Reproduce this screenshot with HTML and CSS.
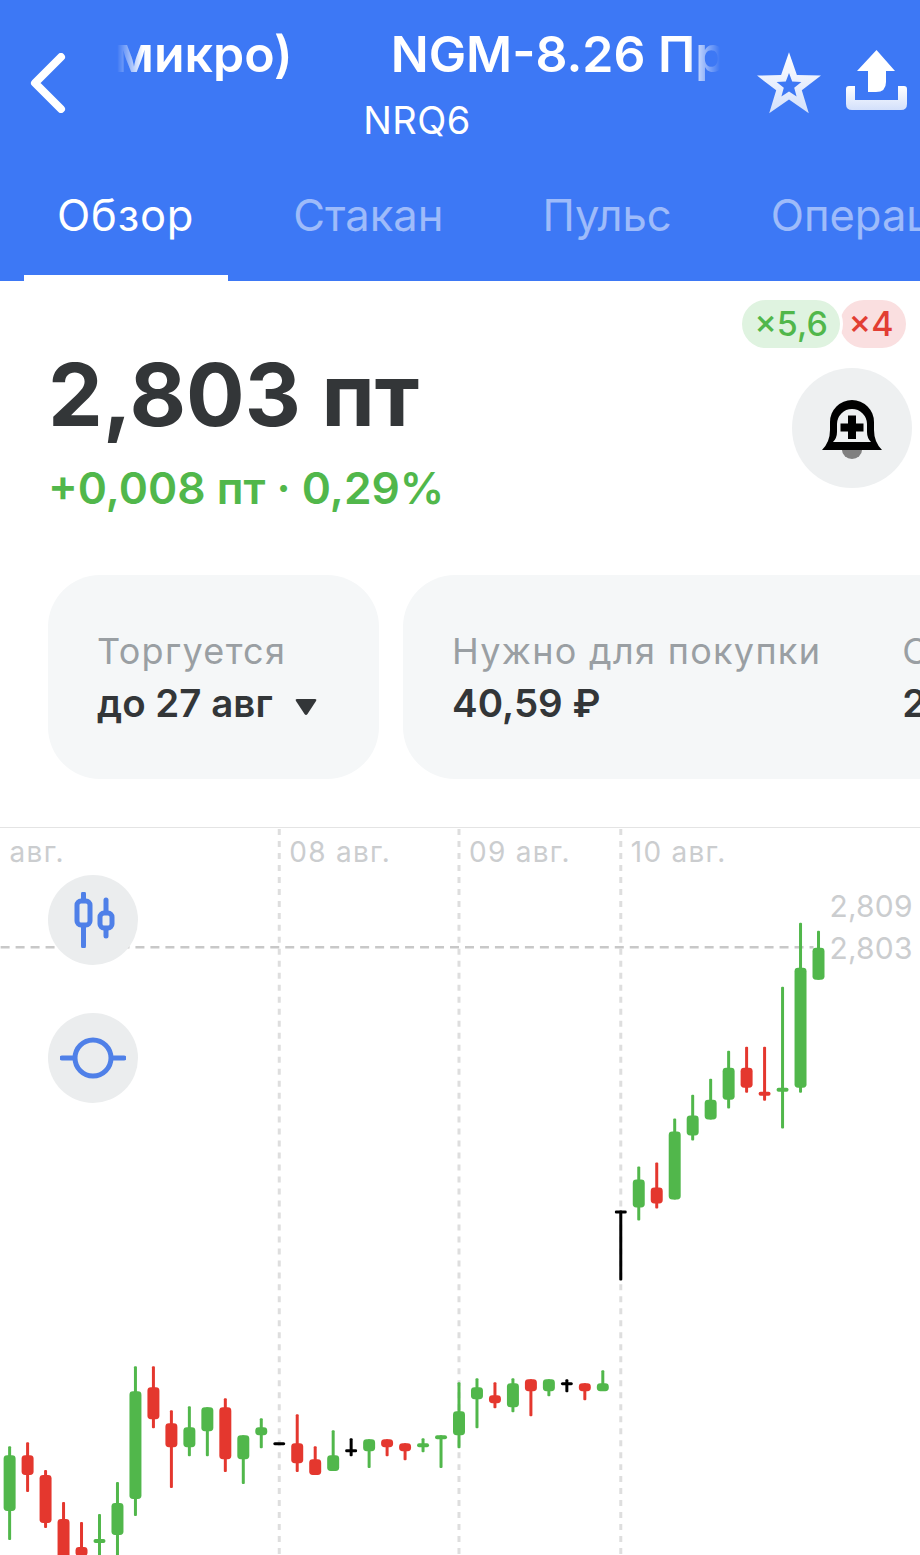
FILE: index.html
```html
<!DOCTYPE html>
<html lang="ru">
<head>
    <meta charset="UTF-8">
    <meta name="viewport" content="width=device-width, initial-scale=1.0">
    <title>NGM-8.26</title>
    <link rel="stylesheet" href="styles.css">
</head>
<body>
    <div class="app">
        <header class="header">
            <div class="topbar">
                <svg class="back" viewBox="0 0 36 60">
                    <path d="M31 4 L5 30 L31 56"/>
                </svg>
                <div class="title-box">
                    <div class="title-clip">
                        <div class="title-track">
                            <span>микро)</span>
                            <span>NGM-8.26 Прогноз</span>
                        </div>
                    </div>
                    <div class="ticker">NRQ6</div>
                </div>
                <svg class="star" viewBox="0 0 66 62">
                    <defs>
                        <linearGradient id="paleFill" x1="0" y1="0" x2="0" y2="1">
                            <stop offset="0" stop-color="#ffffff"/>
                            <stop offset="1" stop-color="#d3e0fb"/>
                        </linearGradient>
                    </defs>
                    <path fill="url(#paleFill)" fill-rule="evenodd" d="M33 .3 40.9 23.1 65 23.6 45.8 38.2 52.8 61.3 33 47.5 13.2 61.3 20.2 38.2 1 23.6 25.1 23.1Z M33 21 29.8 29.6 20.6 30 27.8 35.7 25.4 44.5 33 39.5 40.6 44.5 38.2 35.7 45.4 30 36.2 29.6Z"/>
                </svg>
                <svg class="share" viewBox="0 0 61 60">
                    <path fill="#ffffff" d="M30.5 0 49 21H40V32Q40 42 30 42H22V21H11Z"/>
                    <path fill="url(#paleFill)" d="M0 39Q0 36 3 36H9V50H52V36H58Q61 36 61 39V54Q61 60 55 60H6Q0 60 0 54Z"/>
                </svg>
            </div>
            <nav class="tabs">
                <div class="tab tab-active">Обзор</div>
                <div class="tab">Стакан</div>
                <div class="tab">Пульс</div>
                <div class="tab">Операции</div>
            </nav>
        </header>

        <section class="summary">
            <div class="price-box">
                <div class="price">2,803 пт</div>
                <div class="change">+0,008 пт · 0,29%</div>
            </div>
            <div class="summary-side">
                <div class="leverage">
                    <span class="pill pill-long">×5,6</span>
                    <span class="pill pill-short">×4</span>
                </div>
                <div class="bell-button">
                    <svg class="bell" viewBox="0 0 60 60">
                        <path fill="#808080" d="M20 50H40A10 9 0 0 1 20 50Z"/>
                        <path fill="#000000" fill-rule="evenodd" d="M0 50Q8 42 8 30V22A22 22 0 0 1 52 22V30Q52 42 60 50Z M15 24V32Q15 38 11 42H49Q45 38 45 32V24A15 15 0 0 0 15 24Z"/>
                        <path fill="#000000" d="M26 15.500H34V23.500H41.500V31.500H34V39H26V31.500H18.500V23.500H26Z"/>
                    </svg>
                </div>
            </div>
        </section>

        <section class="cards">
            <div class="card card-short">
                <div class="card-item">
                    <div class="card-label">Торгуется</div>
                    <div class="card-value">до 27 авг
                        <svg class="caret" viewBox="0 0 24 20"><path d="M3 2H21Q23 2 22 4L13.500 17Q12 19 10.500 17L2 4Q1 2 3 2Z"/></svg>
                    </div>
                </div>
            </div>
            <div class="card card-wide">
                <div class="card-item">
                    <div class="card-label">Нужно для покупки</div>
                    <div class="card-value">40,59 ₽</div>
                </div>
                <div class="card-sep"></div>
                <div class="card-item">
                    <div class="card-label">Стоимость</div>
                    <div class="card-value">2,80 пт</div>
                </div>
            </div>
        </section>

        <section class="chart">
            <svg id="chartCanvas" class="chart-canvas" viewBox="0 827 920 728">
                <line class="grid-v" x1="279" y1="828" x2="279" y2="1555"/>
                <line class="grid-v" x1="459" y1="828" x2="459" y2="1555"/>
                <line class="grid-v" x1="621" y1="828" x2="621" y2="1555"/>
                <line class="grid-h" x1="0" y1="946.500" x2="814" y2="946.500"/>
                <text class="axis-date" x="9" y="861">авг.</text>
                <text class="axis-date" x="289" y="861">08 авг.</text>
                <text class="axis-date" x="469" y="861">09 авг.</text>
                <text class="axis-date" x="631" y="861">10 авг.</text>
                <text class="axis-price" x="830" y="916">2,809</text>
                <text class="axis-price" x="830" y="958">2,803</text>
            </svg>
            <div class="chart-tools">
                <div class="tool-button">
                    <svg class="tool-icon" viewBox="0 0 44 56">
                        <path d="M9.500 2V54"/>
                        <rect class="tool-body" x="3" y="9" width="13" height="24" rx="4"/>
                        <path d="M32 8V44"/>
                        <rect class="tool-body" x="26" y="21" width="12" height="15" rx="4"/>
                    </svg>
                </div>
                <div class="tool-button">
                    <svg class="tool-icon" viewBox="0 0 66 44">
                        <path d="M2 22H15"/>
                        <path d="M51 22H64"/>
                        <circle class="tool-body" cx="33" cy="22" r="18"/>
                    </svg>
                </div>
            </div>
        </section>
    </div>
    <script src="chart.js"></script>
</body>
</html>
```

FILE: styles.css
```css
body {
    font-family: Inter, "Noto Sans", sans-serif;
    margin: 0;
    padding: 0;
    background-color: white;
}
.app {
    width: 920px;
    height: 1555px;
    display: flex;
    flex-direction: column;
    overflow: hidden;
    color: #333638;
}

/* header */
.header {
    height: 281px;
    flex: none;
    background: #3d78f5;
    color: white;
    overflow: hidden;
}
.topbar {
    display: flex;
    align-items: flex-start;
    height: 161px;
    padding-top: 27px;
}
.back {
    width: 36px;
    height: 60px;
    flex: none;
    margin: 26px 0 0 30px;
    fill: none;
    stroke: white;
    stroke-width: 8;
    stroke-linecap: round;
    stroke-linejoin: round;
}
.title-box {
    width: 603px;
    flex: none;
    margin-left: 51px;
    text-align: center;
}
.title-clip {
    overflow: hidden;
    -webkit-mask-image: linear-gradient(to right, transparent 0, black 26px, black calc(100% - 32px), transparent 100%);
    mask-image: linear-gradient(to right, transparent 0, black 26px, black calc(100% - 32px), transparent 100%);
}
.title-track {
    display: flex;
    gap: 98px;
    white-space: nowrap;
    font-size: 50px;
    font-weight: 600;
    line-height: 54px;
    margin-left: -3px;
}
.ticker {
    margin-top: 17px;
    margin-right: 3px;
    font-size: 38px;
    line-height: 44px;
    letter-spacing: 0.5px;
}
.star {
    width: 66px;
    height: 62px;
    flex: none;
    margin: 25px 0 0 36px;
}
.share {
    width: 61px;
    height: 60px;
    flex: none;
    margin: 23px 0 0 24px;
}
.tabs {
    display: flex;
    gap: 33px;
    margin-left: 24px;
}
.tab {
    flex: none;
    padding: 0 33px 33px;
    font-size: 43.5px;
    line-height: 54px;
    color: rgba(255, 255, 255, 0.5);
    border-bottom: 6px solid transparent;
}
.tab-active {
    margin-right: -1px;
    padding-right: 34px;
    color: white;
    letter-spacing: 0.8px;
    border-bottom-color: white;
}

/* price */
.summary {
    display: flex;
    justify-content: space-between;
    height: 188px;
    flex: none;
    padding-top: 19px;
}
.price-box {
    margin-left: 48px;
}
.price {
    margin-top: 47px;
    font-size: 87px;
    font-weight: 700;
    line-height: 96px;
    white-space: nowrap;
}
.change {
    margin-top: 20px;
    font-size: 44.3px;
    font-weight: 600;
    line-height: 50px;
    color: #51b74b;
    white-space: nowrap;
}
.summary-side {
    display: flex;
    flex-direction: column;
    align-items: flex-end;
    margin-right: 8px;
}
.leverage {
    display: flex;
    margin-right: 6px;
}
.pill {
    height: 48px;
    font-size: 34px;
    font-weight: 500;
    line-height: 48px;
    border-radius: 24px;
    text-align: center;
}
.pill-long {
    position: relative;
    width: 98px;
    background: #dff3e0;
    color: #51b74b;
    box-shadow: 0 0 0 3px white;
}
.pill-short {
    width: 66px;
    padding-right: 4px;
    box-sizing: border-box;
    background: #fadfe0;
    color: #e23d33;
}
.bell-button {
    width: 120px;
    height: 120px;
    margin-top: 20px;
    display: flex;
    justify-content: center;
    align-items: center;
    border-radius: 50%;
    background: #eef0f1;
}
.bell {
    width: 60px;
    height: 60px;
    margin-top: 3px;
}

/* cards */
.cards {
    display: flex;
    gap: 24px;
    flex: none;
    height: 204px;
    margin: 87px 0 48px 48px;
}
.card {
    flex: none;
    display: flex;
    align-items: center;
    height: 204px;
    box-sizing: border-box;
    padding-left: 49px;
    background: #f5f7f8;
    border-radius: 52px;
}
.card-short {
    width: 331px;
}
.card-wide {
    width: 700px;
}
.card-label {
    margin-top: 2px;
    font-size: 36px;
    line-height: 44px;
    color: #9a9fa3;
    letter-spacing: 1.3px;
    white-space: nowrap;
}
.card-value {
    margin-top: 6px;
    font-size: 38.5px;
    font-weight: 600;
    line-height: 48px;
    white-space: nowrap;
}
.caret {
    width: 24px;
    height: 20px;
    margin-left: 12px;
    fill: #333638;
}
.card-sep {
    width: 2px;
    height: 96px;
    margin: -12px 44px 0 37px;
    background: #d3d6d8;
}

/* chart */
.chart {
    position: relative;
    flex: 1;
    border-top: 1px solid #e4e4e4;
}
.chart-canvas {
    display: block;
    width: 920px;
    height: 727px;
}
.grid-v {
    stroke: #dedede;
    stroke-width: 3;
    stroke-dasharray: 6 6;
}
.grid-h {
    stroke: #c8c8c8;
    stroke-width: 2.5;
    stroke-dasharray: 9 6;
}
.axis-date {
    font-size: 28px;
    letter-spacing: 1.3px;
    fill: #cbcdcf;
}
.axis-price {
    font-size: 30px;
    letter-spacing: 0.2px;
    fill: #cbcdcf;
}
.chart-tools {
    position: absolute;
    left: 48px;
    top: 47px;
    display: flex;
    flex-direction: column;
    gap: 48px;
}
.tool-button {
    width: 90px;
    height: 90px;
    display: flex;
    justify-content: center;
    align-items: center;
    border-radius: 50%;
    background: #ebedee;
}
.tool-icon {
    display: block;
    fill: none;
    stroke: #4f80e8;
    stroke-width: 5;
    stroke-linecap: round;
}
.tool-button:first-child .tool-icon {
    width: 44px;
    height: 56px;
    margin-left: 6px;
}
.tool-button:last-child .tool-icon {
    width: 66px;
    height: 44px;
}
.tool-body {
    fill: #ebedee;
}
```

FILE: chart.js
```js
// x starts at 9 and steps by 18; each row: wick top, wick bottom, body top, body bottom, colour
const G = '#51b74b';
const R = '#e4372e';
const K = '#000000';
const candles = [
    [1446, 1540, 1455, 1511, G],
    [1442, 1492, 1455, 1475, R],
    [1470, 1528, 1475, 1523, R],
    [1502, 1570, 1519, 1570, R],
    [1522, 1570, 1547, 1556, R],
    [1514, 1570, 1539, 1543, G],
    [1482, 1570, 1503, 1535, G],
    [1366, 1516, 1391, 1499, G],
    [1366, 1428, 1387, 1419, R],
    [1410, 1488, 1423, 1447, R],
    [1406, 1456, 1427, 1447, G],
    [1407, 1456, 1407, 1431, G],
    [1398, 1472, 1407, 1459, R],
    [1435, 1484, 1435, 1459, G],
    [1418, 1448, 1427, 1435, G],
    [1443, 1444, 1442, 1445, K],
    [1414, 1472, 1443, 1463, R],
    [1446, 1475, 1459, 1475, R],
    [1430, 1470, 1455, 1471, G],
    [1438, 1456, 1449, 1452, K],
    [1439, 1468, 1439, 1451, G],
    [1439, 1456, 1439, 1447, R],
    [1443, 1460, 1443, 1451, R],
    [1438, 1452, 1443, 1447, G],
    [1435, 1468, 1435, 1439, G],
    [1382, 1448, 1411, 1435, G],
    [1378, 1428, 1387, 1399, G],
    [1382, 1408, 1395, 1403, R],
    [1378, 1412, 1383, 1407, G],
    [1379, 1416, 1379, 1391, R],
    [1379, 1396, 1379, 1391, G],
    [1379, 1392, 1382, 1385, K],
    [1383, 1400, 1383, 1391, R],
    [1370, 1390, 1383, 1391, G],
    [1210, 1280, 1210, 1213, K],
    [1166, 1220, 1179, 1207, G],
    [1162, 1208, 1187, 1203, R],
    [1118, 1199, 1131, 1199, G],
    [1094, 1140, 1115, 1135, G],
    [1078, 1119, 1099, 1119, G],
    [1050, 1108, 1067, 1099, G],
    [1046, 1092, 1067, 1087, R],
    [1046, 1100, 1091, 1095, R],
    [986, 1128, 1087, 1091, G],
    [922, 1092, 967, 1087, G],
    [930, 979, 947, 979, G]
];

const canvas = document.getElementById('chartCanvas');

function addRect(x, y, width, height, radius, colour) {
    const rect = document.createElementNS('http://www.w3.org/2000/svg', 'rect');
    rect.setAttribute('x', x);
    rect.setAttribute('y', y);
    rect.setAttribute('width', width);
    rect.setAttribute('height', height);
    rect.setAttribute('rx', radius);
    rect.setAttribute('fill', colour);
    canvas.appendChild(rect);
}

candles.forEach(function(candle, index) {
    const x = 9 + index * 18;
    const bodyHeight = candle[3] - candle[2];
    addRect(x - 1.5, candle[0], 3, candle[1] - candle[0], 1, candle[4]);
    addRect(x - 6, candle[2], 12, bodyHeight, Math.min(3.5, bodyHeight / 2), candle[4]);
});
```
